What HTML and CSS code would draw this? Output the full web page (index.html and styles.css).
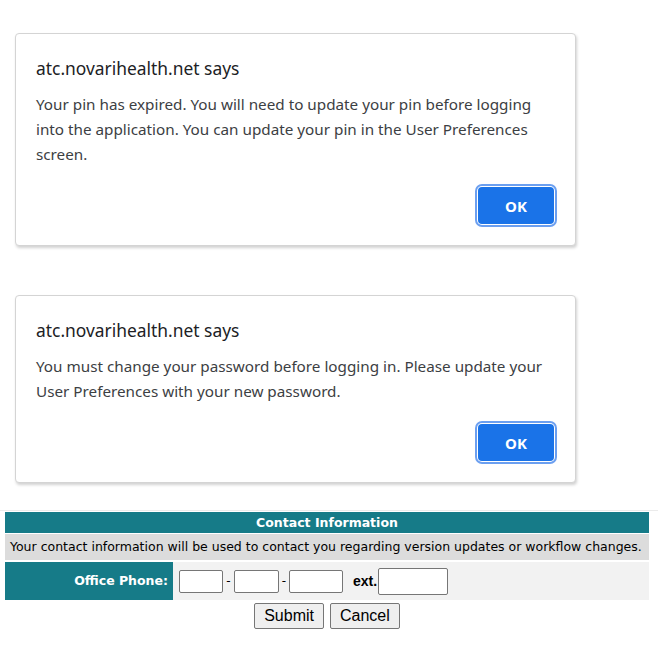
FILE: index.html
```html
<!DOCTYPE html>
<html lang="en">
<head>
<meta charset="utf-8">
<title>Alerts</title>
<link rel="stylesheet" href="styles.css">
</head>
<body>
<div class="page">
  <div class="dialog dialog-first">
    <div class="dialog-title">atc.novarihealth.net says</div>
    <div class="dialog-msg">Your pin has expired. You will need to update your pin before logging into the application. You can update your pin in the User Preferences screen.</div>
    <div class="dialog-actions"><button class="ok-btn">OK</button></div>
  </div>
  <div class="dialog dialog-second">
    <div class="dialog-title">atc.novarihealth.net says</div>
    <div class="dialog-msg">You must change your password before logging in. Please update your User Preferences with your new password.</div>
    <div class="dialog-actions"><button class="ok-btn">OK</button></div>
  </div>
  <div class="contact">
    <div class="contact-head">Contact Information</div>
    <div class="contact-note">Your contact information will be used to contact you regarding version updates or workflow changes.</div>
    <div class="contact-row">
      <div class="contact-label">Office Phone:</div>
      <div class="contact-fields">
        <input class="inp inp-a" type="text"><span class="dash">-</span><input class="inp inp-b" type="text"><span class="dash dash-2">-</span><input class="inp inp-c" type="text"><span class="ext">ext.</span><input class="inp inp-ext" type="text">
      </div>
    </div>
    <div class="contact-actions">
      <button class="form-btn">Submit</button>
      <button class="form-btn">Cancel</button>
    </div>
  </div>
</div>
</body>
</html>
```
FILE: styles.css
```css
html, body {
  margin: 0;
  padding: 0;
  background: #ffffff;
}
.page {
  width: 658px;
  height: 664px;
  overflow: hidden;
  padding-top: 33px;
  box-sizing: border-box;
}
.dialog {
  margin-left: 15px;
  width: 561px;
  box-sizing: border-box;
  border: 1px solid #d4d4d4;
  border-radius: 4px;
  box-shadow: 1px 2px 3px rgba(0,0,0,0.18);
  background: #fff;
  padding: 22px 18px 18px 20px;
  font-family: "Noto Sans", "Open Sans", sans-serif;
  color: #202124;
}
.dialog-second {
  margin-top: 49px;
}
.dialog-title {
  font-size: 17.4px;
  line-height: 24px;
  color: #202124;
}
.dialog-msg {
  margin-top: 12px;
  font-size: 15.25px;
  line-height: 25px;
  color: #3c4043;
  padding-right: 3px;
}
.dialog-actions {
  display: flex;
  justify-content: flex-end;
  margin-top: 17px;
}
.ok-btn {
  width: 76px;
  height: 37px;
  margin: 3px;
  border: none;
  border-radius: 4px;
  background: #1a73e8;
  color: #fff;
  font-family: "Noto Sans", "Open Sans", sans-serif;
  font-weight: 700;
  font-size: 15px;
  box-shadow: 0 0 0 1px #fff, 0 0 0 3px #6b9ff0;
  padding: 0;
}
.contact {
  margin-top: 27px;
  border-top: 1px solid #ebebeb;
  padding-top: 1px;
  font-family: "DejaVu Sans", Verdana, sans-serif;
  font-size: 12.5px;
}
.contact-head, .contact-note, .contact-row {
  margin-left: 5px;
  width: 644px;
}
.contact-head {
  background: #167b88;
  color: #fff;
  font-weight: 700;
  text-align: center;
  height: 21px;
  line-height: 21px;
}
.contact-note {
  margin-top: 1px;
  background: #dcdcdc;
  color: #000;
  height: 26px;
  line-height: 26px;
  padding-left: 5px;
  box-sizing: border-box;
  white-space: nowrap;
}
.contact-row {
  margin-top: 2px;
  display: flex;
  height: 38px;
}
.contact-label {
  width: 168px;
  box-sizing: border-box;
  background: #167b88;
  color: #fff;
  font-weight: 700;
  text-align: right;
  padding-right: 5px;
  line-height: 38px;
}
.contact-fields {
  flex: 1;
  background: #f2f2f2;
  display: flex;
  align-items: center;
  padding-left: 6px;
}
.inp {
  height: 23px;
  box-sizing: border-box;
  border: 1px solid #767676;
  border-radius: 2px;
  background: #fff;
  padding: 0;
  margin: 0;
}
.inp-a { width: 44px; }
.inp-b { width: 45px; }
.inp-c { width: 54px; }
.inp-ext { width: 70px; height: 27px; margin-left: 1px; }
.dash {
  width: 11px;
  text-align: center;
  color: #000;
  font-size: 12px;
}
.dash-2 { width: 10px; }
.ext {
  margin-left: 10px;
  font-family: "Liberation Sans", Arial, sans-serif;
  font-weight: 700;
  font-size: 14px;
  color: #000;
}
.contact-actions {
  display: flex;
  justify-content: center;
  gap: 6px;
  margin-left: 5px;
  width: 644px;
  margin-top: 3px;
}
.form-btn {
  height: 26px;
  padding: 0 9px;
  border: 1px solid #767676;
  border-radius: 2px;
  background: #efefef;
  font-family: "Liberation Sans", Arial, sans-serif;
  font-size: 16px;
  color: #000;
}
```
